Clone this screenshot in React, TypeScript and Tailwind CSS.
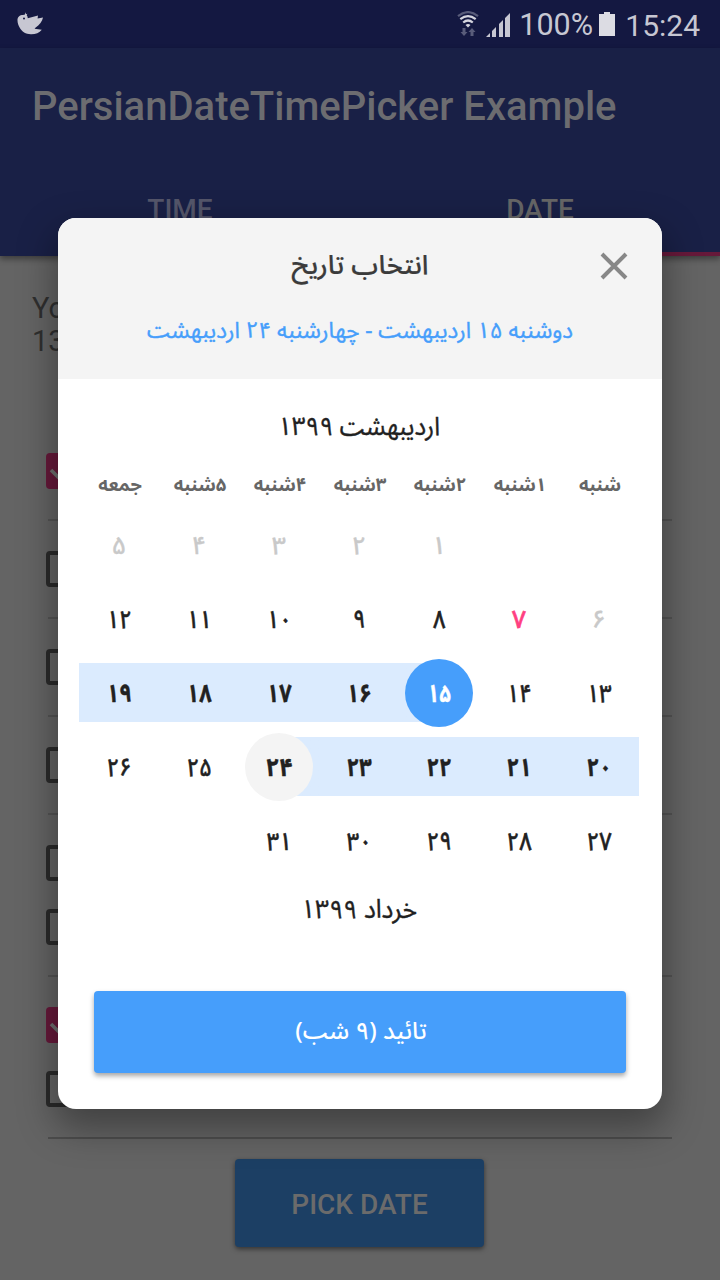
import React from "react";

type Tone = "past" | "today" | "normal" | "range" | "start" | "end";

const WEEKDAYS = ["شنبه", "۱شنبه", "۲شنبه", "۳شنبه", "۴شنبه", "۵شنبه", "جمعه"];
const MONTH_DAYS = 31;
const LEADING_BLANKS = 2;
const TODAY = 7;
const START = 15;
const END = 24;

const toPersian = (n: number) => String(n).replace(/\d/g, (d) => "۰۱۲۳۴۵۶۷۸۹"[Number(d)]);

const toneOf = (day: number): Tone => {
  if (day < TODAY) return "past";
  if (day === TODAY) return "today";
  if (day === START) return "start";
  if (day === END) return "end";
  if (day > START && day < END) return "range";
  return "normal";
};

const TEXT: Record<Tone, string> = {
  past: "text-[#c9c9c9] font-medium [-webkit-text-stroke:0.3px]",
  today: "text-[#ff4081] font-medium [-webkit-text-stroke:0.5px]",
  normal: "text-[#212121] font-medium scale-x-[0.87] [-webkit-text-stroke:0.5px]",
  range: "text-[#212121] font-bold scale-x-[0.87] [-webkit-text-stroke:0.4px]",
  start: "text-white font-bold scale-x-[0.82] [-webkit-text-stroke:0.4px]",
  end: "text-[#212121] font-bold scale-x-95 [-webkit-text-stroke:0.4px]",
};

const BAND: Record<Tone, string> = {
  past: "",
  today: "",
  normal: "",
  range: "bg-[#dbebfe]",
  start: "bg-linear-to-l from-transparent from-50% to-[#dbebfe] to-50%",
  end: "bg-linear-to-r from-transparent from-50% to-[#dbebfe] to-50%",
};

const DISC: Record<Tone, string> = {
  past: "",
  today: "",
  normal: "",
  range: "",
  start: "bg-[#469efb]",
  end: "bg-[#f4f4f4]",
};

function Day({ day }: { day: number }) {
  const tone = toneOf(day);
  return (
    <div className="flex h-[74px] items-start pt-[7px]">
      <div className={`flex h-[59px] w-20 items-center justify-center ${BAND[tone]}`}>
        <div className={`flex size-[68px] shrink-0 items-center justify-center rounded-full pt-[3px] ${DISC[tone]}`}>
          <span className={`text-[25px] leading-none ${TEXT[tone]}`}>{toPersian(day)}</span>
        </div>
      </div>
    </div>
  );
}

function Check({ checked = false }: { checked?: boolean }) {
  if (!checked) return <div className="ml-[46px] size-9 rounded border-4 border-[#2b2b2b]" />;
  return (
    <div className="ml-[46px] flex size-9 items-center justify-center rounded bg-[#66193a]">
      <svg viewBox="0 0 36 36" className="size-9" fill="none" stroke="#6f6f6f" strokeWidth="3.6">
        <path d="M5 17l9 9L31 9" />
      </svg>
    </div>
  );
}

const Divider = () => <div className="mx-12 my-[30px] h-0.5 bg-[#545454]" />;

function StatusBar() {
  return (
    <div className="flex h-12 items-center justify-between bg-[#141841] pr-5 pl-4 text-[#c7c7d2]">
      <svg viewBox="0 0 28 24" className="h-6 w-7" fill="currentColor">
        <path d="M1.5 8.5C1.2 5 3.8 3 7 3l2-.5.5-2.200.7 2 1.200-.5-.7 1.500c.7.8 1 1.800 1.100 2.900L22 3.500l-.4 3L27 5.500c-.6 4-3.500 7.300-7.600 10.300l-.8.9 7.200 1.100c-2.500 3.400-6.400 4.600-11 4.500-5 0-9-2.600-11.200-6.700-1.300-2.400-2.100-4.500-2.100-7.100z" />
        <circle cx="8" cy="6.500" r="1" fill="#141841" />
      </svg>
      <div className="flex items-center">
        <svg viewBox="0 0 22 26" className="mr-[7px] h-[26px] w-[22px]" fill="none" strokeWidth="2.200">
          <path d="M1 5.200Q11-3 21 5.200" stroke="#595c7a" />
          <path d="M3.300 8.200Q11 2 18.700 8.200M6.200 11.500Q11 7.500 15.800 11.500" stroke="#d5d5de" />
          <path d="M8.500 14Q11 12 13.500 14L11 16.500z" fill="#d5d5de" />
          <path d="M5.500 17h3v4h2L7 25l-3.500-4h2zM13.500 25h3v-4h2L15 17l-3.500 4h2z" fill="#595c7a" />
        </svg>
        <svg viewBox="0 0 25 25" className="mr-2 h-[25px] w-[25px]" fill="currentColor">
          <path d="M0 25l4-4v4zM6 19l4-4v10H6zM13 12l4-4v17h-4zM19 6l5-5v24h-5z" />
        </svg>
        <span className="w-20 pt-[3px] text-[30.5px] leading-none whitespace-nowrap">100%</span>
        <svg viewBox="0 0 16 24" className="mr-[10px] h-6 w-4" fill="#dcdce3">
          <path d="M0 2h5V0h6v2h5v22H0z" />
        </svg>
        <span className="pt-[3px] text-[30px] leading-none">15:24</span>
      </div>
    </div>
  );
}

function CalendarDialog() {
  return (
    <div
      dir="rtl"
      className="absolute top-[218px] left-[58px] flex h-[891px] w-[604px] flex-col overflow-hidden rounded-[18px] bg-white shadow-[0_16px_36px_4px_rgba(0,0,0,0.35)]"
      style={{ fontFamily: '"Noto Sans Arabic", "Noto Naskh Arabic UI", "Noto Naskh Arabic", "DejaVu Sans", sans-serif' }}
    >
      <header className="h-[161px] shrink-0 bg-[#f4f4f4]">
        <div className="grid h-24 grid-cols-[96px_1fr_96px] items-center">
          <svg viewBox="0 0 28 28" className="size-7 justify-self-center" fill="none" stroke="#878787" strokeWidth="4">
            <path d="M2 2l24 24M26 2L2 26" />
          </svg>
          <h2 className="text-center text-[27px] font-medium text-[#3b3b3b] [-webkit-text-stroke:0.2px]">انتخاب تاریخ</h2>
        </div>
        <p className="pt-px text-center text-[22.4px] leading-8 text-[#469efb] [-webkit-text-stroke:0.4px]">دوشنبه ۱۵ اردیبهشت - چهارشنبه ۲۴ اردیبهشت</p>
      </header>
      <section className="pr-[23px] pl-[19px] text-[#212121]">
        <h3 className="flex h-24 scale-x-95 items-center justify-center pl-0.5 text-[25.5px] [-webkit-text-stroke:0.4px]">اردیبهشت ۱۳۹۹</h3>
        <div className="grid grid-cols-[repeat(7,80px)]">
          {WEEKDAYS.map((name) => (
            <div key={name} className="flex h-[33px] items-start justify-center pt-px pl-0.5 text-[18.5px] leading-5 font-bold whitespace-nowrap text-[#666]">
              {name}
            </div>
          ))}
          {Array.from({ length: LEADING_BLANKS }, (_, i) => (
            <div key={`blank-${i}`} />
          ))}
          {Array.from({ length: MONTH_DAYS }, (_, i) => (
            <Day key={i + 1} day={i + 1} />
          ))}
        </div>
        <h3 className="flex h-[60px] scale-x-95 items-center justify-center pt-[3px] pl-0.5 text-[26px] [-webkit-text-stroke:0.4px]">خرداد ۱۳۹۹</h3>
      </section>
      <button className="mx-9 mt-auto mb-9 h-[82px] shrink-0 rounded bg-[#469efb] pl-0.5 text-[24px] font-medium text-white shadow-[0_3px_5px_rgba(0,0,0,0.35)]">
        تائید (۹ شب)
      </button>
    </div>
  );
}

export default function App() {
  return (
    <div className="relative h-[1280px] w-[720px] overflow-hidden bg-[#646464] font-['Roboto',sans-serif]">
      <StatusBar />
      <header className="flex h-52 flex-col bg-[#192046] shadow-[0_3px_6px_rgba(0,0,0,0.4)]">
        <h1 className="px-8 pt-[39px] text-[40px] leading-10 font-medium text-[#6c6c70]">PersianDateTimePicker Example</h1>
        <nav className="mt-auto grid h-24 grid-cols-2 text-center text-[28px] font-medium">
          <span className="pt-[29px] text-[#54566a]">TIME</span>
          <span className="border-b-4 border-[#66193a] pt-[29px] text-[#666]">DATE</span>
        </nav>
      </header>
      <main>
        <p className="h-[197px] px-8 pt-9 text-[29px] leading-[33px] text-[#2f2f2f]">
          You
          <br />
          1399
        </p>
        <Check checked />
        <Divider />
        <Check />
        <Divider />
        <Check />
        <Divider />
        <Check />
        <Divider />
        <Check />
        <div className="h-7" />
        <Check />
        <Divider />
        <Check checked />
        <div className="h-7" />
        <Check />
        <div className="mx-12 mt-[30px] mb-5 h-0.5 bg-[#4d4d4d]" />
        <button className="ml-[235px] block h-[88px] w-[249px] rounded bg-[#1c3f64] pt-1 text-[28px] font-medium text-[#6b6b6b] shadow-[0_2px_5px_rgba(0,0,0,0.5)]">
          PICK DATE
        </button>
      </main>
      <CalendarDialog />
    </div>
  );
}
